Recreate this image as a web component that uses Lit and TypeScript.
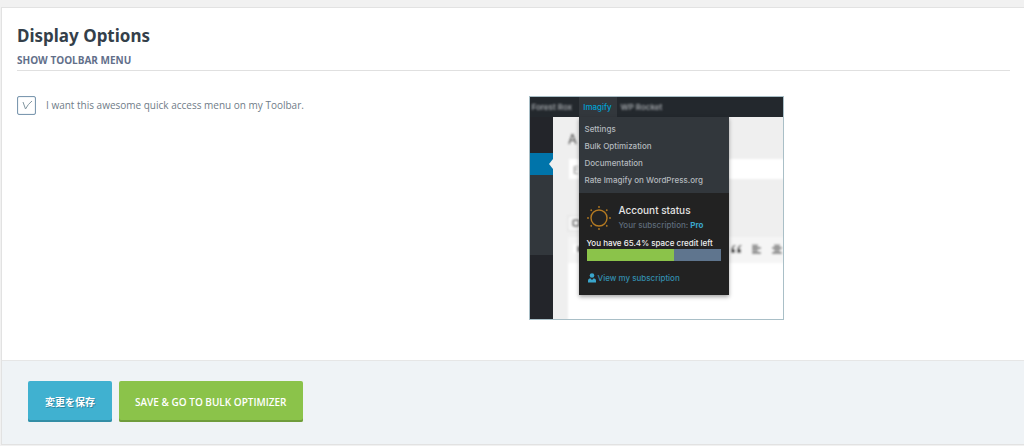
import { LitElement, html, css, svg } from "lit";
import { customElement, property, state } from "lit/decorators.js";

@customElement("toolbar-preview")
class ToolbarPreview extends LitElement {
  @property({ type: Number }) credit = 65.4;

  static styles = css`
    :host {
      display: block;
      font-family: Inter, sans-serif;
      color: #b4b9be;
    }
    .frame {
      position: relative;
      box-sizing: border-box;
      width: 255px;
      height: 224px;
      overflow: hidden;
      border: 1px solid #a9bfc7;
      background: #f0f0f0;
    }
    .scene {
      display: block;
      width: 254px;
      height: 223px;
    }
    .bar {
      position: absolute;
      inset: 0 0 auto 0;
      display: grid;
      grid-template-columns: 49px 38px 1fr;
      line-height: 20px;
      font-size: 8px;
      white-space: nowrap;
    }
    .site,
    .other {
      padding-left: 2px;
      font-weight: 600;
      color: #a0a4a8;
      filter: blur(0.8px);
    }
    .other {
      padding-left: 4px;
    }
    .current {
      background: #32373c;
      color: #00a0d2;
      text-align: center;
      font-weight: 500;
    }
    .menu {
      position: absolute;
      top: 20px;
      left: 49px;
      width: 150px;
      box-shadow: 0 2px 4px rgba(0, 0, 0, 0.35);
      font-size: 8px;
      font-weight: 500;
    }
    .links {
      box-sizing: border-box;
      height: 76px;
      margin: 0;
      padding: 4px 6px 5px;
      display: grid;
      grid-template-rows: repeat(4, 1fr);
      align-items: center;
      list-style: none;
      background: #32373c;
      white-space: nowrap;
    }
    a {
      color: inherit;
      text-decoration: none;
    }
    .account {
      box-sizing: border-box;
      height: 102px;
      padding: 10px 8px 8px;
      background: #222;
    }
    .status {
      display: grid;
      grid-template-columns: 24px 1fr;
      column-gap: 8px;
      align-items: center;
      white-space: nowrap;
    }
    .name {
      font-size: 10px;
      line-height: 15px;
      color: #e4e4e4;
    }
    .plan {
      line-height: 14px;
      color: #5f6c7b;
    }
    .plan b {
      color: #3aa6cc;
    }
    .left {
      margin-top: 5px;
      line-height: 12px;
      color: #f0f0f0;
      white-space: nowrap;
    }
    .meter {
      height: 12px;
      background: #5f758e;
    }
    .fill {
      height: 12px;
      background: #8bc34a;
    }
    .view {
      display: flex;
      align-items: center;
      gap: 2px;
      margin-top: 11px;
      padding-left: 1px;
      line-height: 12px;
      color: #338eae;
    }
  `;

  render() {
    const rays = [0, 45, 90, 135, 180, 225, 270, 315];
    return html`
      <div class="frame">
        <svg class="scene" viewBox="0 0 254 223" aria-hidden="true">
          <defs>
            <filter id="soft" x="-20%" y="-20%" width="140%" height="140%">
              <feGaussianBlur stdDeviation="0.8" />
            </filter>
          </defs>
          <rect width="254" height="223" fill="#efefef" />
          <g filter="url(#soft)">
            <rect x="39" y="62" width="230" height="20" fill="#fff" />
            <rect x="38" y="119" width="24" height="15" fill="#f8f8f8" stroke="#ddd" />
            <rect x="38" y="140" width="230" height="26" fill="#f5f5f5" />
            <rect x="38" y="166" width="230" height="70" fill="#fff" />
            <text x="38" y="47" font-family="Inter" font-size="13" fill="#444">A</text>
            <text x="43" y="77" font-family="Inter" font-size="10" fill="#666">E</text>
            <rect x="43" y="123" width="6" height="6" rx="2" fill="none" stroke="#777" stroke-width="2" />
            <rect x="43" y="147" width="9" height="9" rx="1" fill="#fff" />
            <rect x="47" y="149" width="5" height="6" fill="#888" />
            <g fill="#444">
              <path d="M206 148h-2q-3 2-3 5v3h4v-4h-2q0-2 3-4zM212 148h-2q-3 2-3 5v3h4v-4h-2q0-2 3-4z" />
            </g>
            <path
              d="M222 148.500h6M222 151h9M222 153.500h6M222 156h9M244 148.500h6M242 151h10M244 153.500h6M242 156h10"
              stroke="#555"
              stroke-width="1.500"
            />
          </g>
          <rect width="254" height="20" fill="#23282d" />
          <rect y="20" width="23" height="203" fill="#23252a" />
          <rect y="56" width="23" height="22" fill="#0074aa" />
          <path d="M23 62l-4 5 4 5z" fill="#efefef" />
          <rect y="78" width="23" height="80" fill="#32373c" />
        </svg>
        <div class="bar">
          <span class="site">Forest Rox</span>
          <span class="current">Imagify</span>
          <span class="other">WP Rocket</span>
        </div>
        <div class="menu">
          <ul class="links">
            ${["Settings", "Bulk Optimization", "Documentation", "Rate Imagify on WordPress.org"].map(
              (t) => html`<li><a href="#">${t}</a></li>`
            )}
          </ul>
          <div class="account">
            <div class="status">
              <svg width="24" height="26" viewBox="-12 -13 24 26" aria-hidden="true">
                <circle r="8" fill="none" stroke="#b47a22" stroke-width="1.400" />
                ${rays.map(
                  (a) => svg`<circle cy="-11" r="0.900" fill="#b47a22" transform="rotate(${a})" />`
                )}
              </svg>
              <div>
                <div class="name">Account status</div>
                <div class="plan">Your subscription: <b>Pro</b></div>
              </div>
            </div>
            <div class="left">You have ${this.credit}% space credit left</div>
            <div class="meter"><div class="fill" style="width:${this.credit}%"></div></div>
            <a class="view" href="#">
              <svg width="8" height="10" viewBox="0 0 8 10" fill="#3aa6cc" aria-hidden="true">
                <circle cx="4" cy="2.500" r="2.300" />
                <path d="M0 9.500V7.500Q0 5.500 2.200 5.200L4 7 5.800 5.200Q8 5.500 8 7.500V9.500Z" />
              </svg>
              View my subscription
            </a>
          </div>
        </div>
      </div>
    `;
  }
}

@customElement("app-root")
class AppRoot extends LitElement {
  @state() private showMenu = true;

  static styles = css`
    :host {
      display: block;
      box-sizing: border-box;
      min-height: 100vh;
      padding: 7px 0 1px 1px;
      background: #f1f1f1;
      font-family: "Open Sans", "Noto Sans CJK JP", sans-serif;
      color: #6f7c88;
    }
    .card {
      border: 1px solid #e2e2e2;
      border-right: 0;
      background: #fff;
    }
    .body {
      padding: 16px 14px 40px 15px;
    }
    h2 {
      margin: 0;
      font-family: "Noto Sans", sans-serif;
      font-size: 17px;
      line-height: 24px;
      color: #343f4a;
    }
    h3 {
      margin: 0;
      padding: 4px 0 2px;
      border-bottom: 1px solid #e0e0e0;
      font-size: 10px;
      line-height: 16px;
      color: #626f8a;
      text-transform: uppercase;
    }
    .options {
      display: grid;
      grid-template-columns: 1fr 1fr;
      column-gap: 30px;
      align-items: start;
      padding-top: 25px;
    }
    label {
      display: flex;
      align-items: center;
      gap: 10px;
      font-size: 10px;
      line-height: 19px;
    }
    input {
      appearance: none;
      box-sizing: border-box;
      width: 19px;
      height: 19px;
      margin: 0;
      border: 1px solid #7d99b0;
      border-radius: 2px;
      box-shadow: inset 0 0 1px #7d99b0;
    }
    .tick {
      display: grid;
    }
    .tick > * {
      grid-area: 1 / 1;
    }
    .tick svg {
      pointer-events: none;
    }
    .actions {
      display: flex;
      gap: 7px;
      padding: 20px 26px 22px;
      border-top: 1px solid #e6e6e6;
      background: #eff3f6;
    }
    button {
      height: 41px;
      padding: 0 16px;
      border: 0;
      border-radius: 2px;
      font: 600 10px / 38px "Open Sans", "Noto Sans CJK JP", sans-serif;
      color: #fff;
      text-transform: uppercase;
      background: #8bc34a;
      box-shadow: inset 0 -2px 0 #6f9c3b;
    }
    .save {
      padding: 0 17px;
      background: #40b1d0;
      box-shadow: inset 0 -2px 0 #338ea6;
      font-weight: 700;
      text-shadow: 1px 1px 0 #2e86a0;
    }
  `;

  render() {
    return html`
      <form class="card" @submit=${(e: Event) => e.preventDefault()}>
        <div class="body">
          <h2>Display Options</h2>
          <h3>Show toolbar menu</h3>
          <div class="options">
            <label for="menu">
              <span class="tick">
                <input
                  id="menu"
                  type="checkbox"
                  .checked=${this.showMenu}
                  @change=${(e: Event) => (this.showMenu = (e.target as HTMLInputElement).checked)}
                />
                ${this.showMenu
                  ? html`<svg width="19" height="19" viewBox="0 0 19 19" aria-hidden="true">
                      <path d="M6 6L8.500 13Q11 8 15 5" fill="none" stroke="#8296a0" />
                    </svg>`
                  : null}
              </span>
              I want this awesome quick access menu on my Toolbar.
            </label>
            <toolbar-preview></toolbar-preview>
          </div>
        </div>
        <div class="actions">
          <button class="save" type="submit">変更を保存</button>
          <button type="submit">Save &amp; Go to Bulk Optimizer</button>
        </div>
      </form>
    `;
  }
}
